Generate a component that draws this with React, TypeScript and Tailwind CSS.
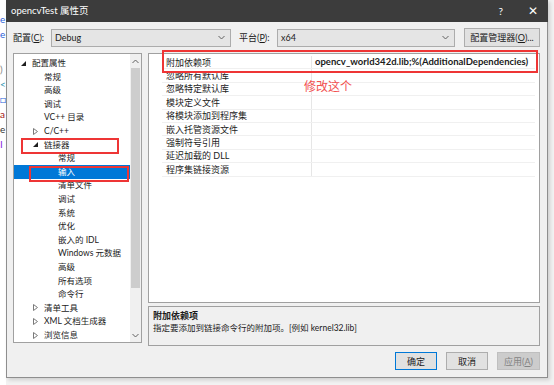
import React from 'react';

type Node = { t: string; l: 0 | 1 | 2; e?: 'open' | 'closed'; sel?: boolean };

const tree: Node[] = [
  { t: '配置属性', l: 0, e: 'open' },
  { t: '常规', l: 1 },
  { t: '高级', l: 1 },
  { t: '调试', l: 1 },
  { t: 'VC++ 目录', l: 1 },
  { t: 'C/C++', l: 1, e: 'closed' },
  { t: '链接器', l: 1, e: 'open' },
  { t: '常规', l: 2 },
  { t: '输入', l: 2, sel: true },
  { t: '清单文件', l: 2 },
  { t: '调试', l: 2 },
  { t: '系统', l: 2 },
  { t: '优化', l: 2 },
  { t: '嵌入的 IDL', l: 2 },
  { t: 'Windows 元数据', l: 2 },
  { t: '高级', l: 2 },
  { t: '所有选项', l: 2 },
  { t: '命令行', l: 2 },
  { t: '清单工具', l: 1, e: 'closed' },
  { t: 'XML 文档生成器', l: 1, e: 'closed' },
  { t: '浏览信息', l: 1, e: 'closed' },
];

const indent = ['pl-[7px]', 'pl-[19px]', 'pl-[33px]'];

const props = [
  '附加依赖项',
  '忽略所有默认库',
  '忽略特定默认库',
  '模块定义文件',
  '将模块添加到程序集',
  '嵌入托管资源文件',
  '强制符号引用',
  '延迟加载的 DLL',
  '程序集链接资源',
];

function Expander({ kind }: { kind?: 'open' | 'closed' }) {
  return (
    <span className="w-[11px] h-full flex items-center">
      {kind === 'open' && (
        <svg width="5" height="5" viewBox="0 0 5 5">
          <polygon points="5,0 5,5 0,5" fill="#1e1e1e" />
        </svg>
      )}
      {kind === 'closed' && (
        <svg width="5" height="7" viewBox="0 0 5 7">
          <polygon points="0.5,0.5 4.5,3.5 0.5,6.5" fill="none" stroke="#7a7a7a" strokeWidth="1" />
        </svg>
      )}
    </span>
  );
}

function Chevron({ up }: { up?: boolean }) {
  return (
    <svg width="7" height="5" viewBox="0 0 7 5">
      <polyline points={up ? '0.5,4 3.5,1 6.5,4' : '0.5,1 3.5,4 6.5,1'} fill="none" stroke="#606060" strokeWidth="1" />
    </svg>
  );
}

function Select({ value, w }: { value: string; w: string }) {
  return (
    <div className={`${w} h-[18px] bg-[#e5e5e5] border border-[#acacac] flex items-center justify-between pl-[3px] pr-[5px]`}>
      <span>{value}</span>
      <Chevron />
    </div>
  );
}

export default function App() {
  return (
    <div className="w-[554px] h-[385px] bg-[#f2f2f2] relative overflow-hidden flex text-[9px] leading-none text-[#1b1b1b] font-[family-name:Lato,Noto_Sans_CJK_SC,sans-serif]">
      {/* editor behind the dialog */}
      <div className="w-[6px] shrink-0 flex flex-col bg-white pt-[12px] text-[10px] leading-[15px] overflow-hidden">
        <span className="text-[#2b5fd9]">e</span>
        <span className="text-[#2b5fd9]">e</span>
        <span className="h-[20px]" />
        <span className="text-[#888]">)</span>
        <span className="text-[#2b91af]">&lt;</span>
        <span className="text-[#2b5fd9]">□</span>
        <span className="text-[#a31515]">a</span>
        <span className="text-[#333]">e</span>
        <span className="text-[#8a2be2]">I</span>
      </div>

      <div className="w-[542px] h-[378px] shrink-0 flex flex-col border-l border-r border-b border-[#8e8e8e] bg-[#f0f0f0] shadow-[2px_2px_4px_rgba(0,0,0,0.15)]">
        {/* title bar */}
        <div className="h-[22px] bg-[#3c3c3c] text-white flex items-center pl-[5px] pr-[10px] -ml-px -mr-px">
          <span className="text-[9.5px]">opencvTest 属性页</span>
          <span className="ml-auto text-[10px] mr-[25px]">?</span>
          <span className="text-[12px]">✕</span>
        </div>

        <div className="flex-1 flex flex-col pl-[6px] pr-[7px]">
          {/* config row */}
          <div className="h-[19px] mt-[6px] flex items-center">
            <span className="w-[38px]">配置(<u>C</u>):</span>
            <Select value="Debug" w="w-[180px]" />
            <span className="ml-[8px] w-[38px]">平台(<u>P</u>):</span>
            <Select value="x64" w="w-[178px]" />
            <div className="ml-auto w-[76px] h-[19px] bg-[#e1e1e1] border border-[#adadad] flex items-center justify-center">
              配置管理器(<u>O</u>)...
            </div>
          </div>

          {/* main area */}
          <div className="mt-[6px] flex gap-[6px]">
            {/* tree */}
            <div className="w-[129px] h-[290px] bg-white border border-[#a0a0a0] flex">
              <div className="flex-1 flex flex-col pt-[2.5px] overflow-hidden text-[8.5px]">
                {tree.map((n, i) => (
                  <div
                    key={i}
                    className={`h-[13.6px] shrink-0 flex items-center ${indent[n.l]} ${n.sel ? 'bg-[#0078d7] text-white' : ''}`}
                  >
                    <Expander kind={n.e} />
                    <span className="whitespace-nowrap">{n.t}</span>
                  </div>
                ))}
              </div>
              <div className="w-[11px] bg-[#f0f0f0] flex flex-col items-center">
                <div className="h-[14px] flex items-center">
                  <Chevron up />
                </div>
                <div className="w-[9px] h-[220px] bg-[#cdcdcd]" />
                <div className="flex-1" />
                <div className="h-[14px] flex items-center">
                  <Chevron />
                </div>
              </div>
            </div>

            {/* right side */}
            <div className="flex-1 flex flex-col gap-[3px]">
              <div className="h-[250px] bg-white border border-[#a0a0a0] flex flex-col pt-[2px] pl-[13px] pr-[4px]">
                {props.map((p, i) => (
                  <div key={i} className="h-[13.4px] shrink-0 flex border-b border-[#f0f0f0]">
                    <span className="w-[150px] flex items-center pl-[4px] border-r border-[#e6e6e6] whitespace-nowrap">{p}</span>
                    <span className="flex-1 flex items-center pl-[3px] font-bold text-[9.5px] whitespace-nowrap">
                      {i === 0 ? 'opencv_world342d.lib;%(AdditionalDependencies)' : ''}
                    </span>
                  </div>
                ))}
              </div>
              <div className="h-[40px] border border-[#a0a0a0] flex flex-col pl-[4px] pt-[4px] gap-[4px]">
                <span className="font-bold">附加依赖项</span>
                <span className="text-[8.5px]">指定要添加到链接命令行的附加项。[例如 kernel32.lib]</span>
              </div>
            </div>
          </div>

          {/* buttons */}
          <div className="mt-[6px] flex justify-end gap-[9px]">
            <div className="w-[42px] h-[18px] bg-[#e1e1e1] border border-[#0078d7] flex items-center justify-center">确定</div>
            <div className="w-[42px] h-[18px] bg-[#e1e1e1] border border-[#adadad] flex items-center justify-center">取消</div>
            <div className="w-[43px] h-[18px] bg-[#cccccc] border border-[#bfbfbf] text-[#838383] flex items-center justify-center">
              应用(<u>A</u>)
            </div>
          </div>
        </div>
      </div>

      {/* annotations */}
      <div className="absolute left-[162px] top-[50px] w-[376px] h-[23px] border-2 border-[#ee3535]" />
      <div className="absolute left-[21px] top-[138px] w-[98px] h-[16px] border-2 border-[#ee3535]" />
      <div className="absolute left-[29px] top-[166px] w-[100px] h-[16px] border-2 border-[#ee3535]" />
      <span className="absolute left-[304px] top-[81px] text-[12px] text-[#f25050]">修改这个</span>
    </div>
  );
}
